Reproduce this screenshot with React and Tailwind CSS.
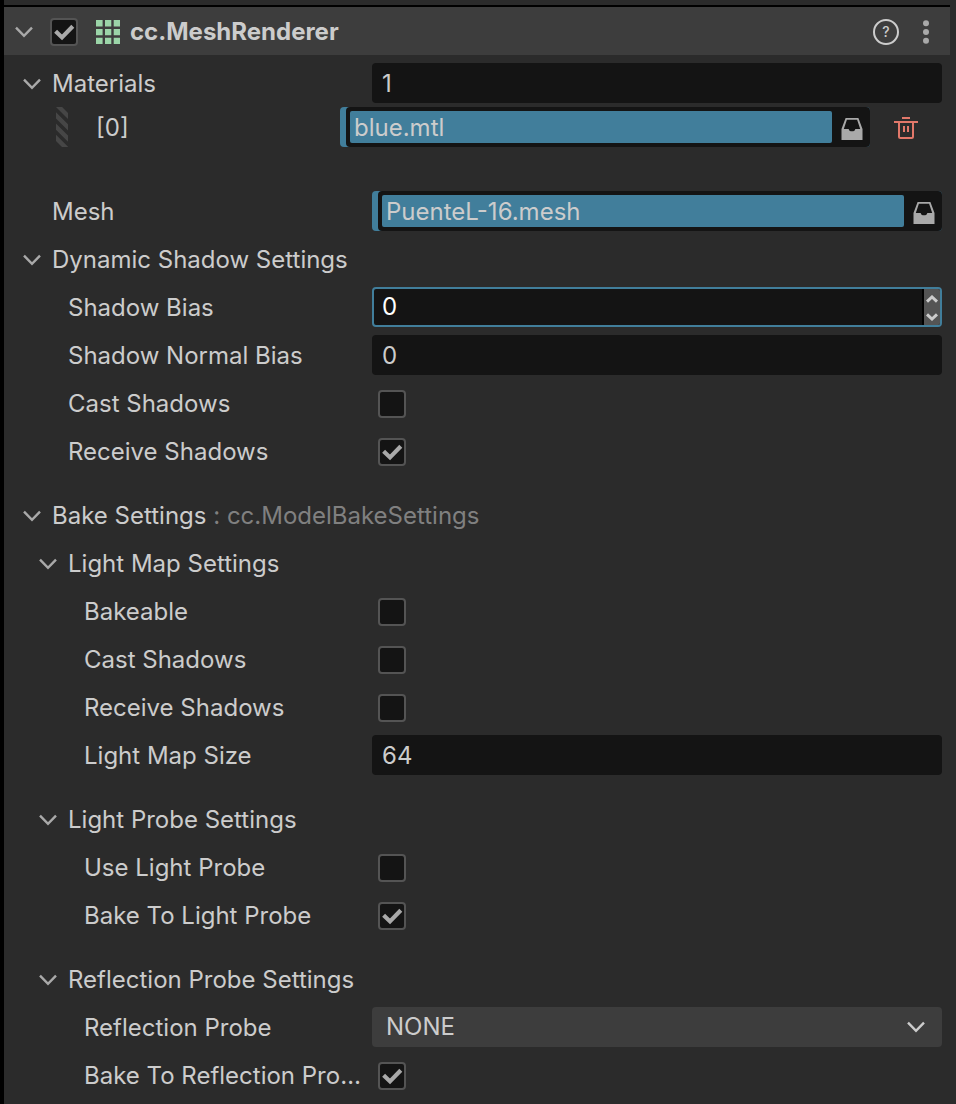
import { useState } from "react";

function Chevron({ className = "" }) {
  return (
    <svg viewBox="0 0 18 12" className={`h-3 w-[18px] ${className}`} fill="none" stroke="currentColor" strokeWidth="2.4" aria-hidden="true">
      <path d="M1 1.6 9 9.8 17 1.6" />
    </svg>
  );
}

function Toggle({ label }) {
  const [open, setOpen] = useState(true);
  return (
    <button
      type="button"
      aria-label={`Toggle ${label}`}
      aria-expanded={open}
      onClick={() => setOpen(!open)}
      className="flex w-7 shrink-0 items-center text-[#a9a9a9]"
    >
      <Chevron />
    </button>
  );
}

function Checkbox({ id, checked = false, label }) {
  return (
    <span className="grid size-7 shrink-0">
      <input
        id={id}
        type="checkbox"
        aria-label={label}
        defaultChecked={checked}
        className="peer size-7 appearance-none rounded border-2 border-[#545454] bg-[#141414] [grid-area:1/1]"
      />
      <svg
        viewBox="0 0 28 28"
        fill="none"
        stroke="#a9a9a9"
        strokeWidth="4.2"
        className="pointer-events-none invisible size-7 [grid-area:1/1] peer-checked:visible"
        aria-hidden="true"
      >
        <path d="M5.6 13.2 12 19.4 22.8 8.2" />
      </svg>
    </span>
  );
}

function Row({ id, label, indent, children }) {
  return (
    <div className="flex h-10 items-center">
      <label htmlFor={id} className={`w-[368px] shrink-0 truncate pr-2 pt-0.5 ${indent}`}>
        {label}
      </label>
      {children}
    </div>
  );
}

function CheckRow({ id, label, indent, checked }) {
  return (
    <Row id={id} label={label} indent={indent}>
      <span className="flex pl-[6px] pt-0.5">
        <Checkbox id={id} checked={checked} />
      </span>
    </Row>
  );
}

const inputStyle = "h-10 min-w-0 flex-1 rounded bg-[#141414] px-[10px] outline-none";

function GroupTitle({ label, indent, note }) {
  return (
    <div className={`flex h-10 items-center pt-0.5 ${indent}`}>
      <Toggle label={label} />
      <h3 className="truncate pl-px">
        {label}
        {note && <span className="text-[#808080]"> : {note}</span>}
      </h3>
    </div>
  );
}

function AssetField({ id, value }) {
  return (
    <div className="flex min-w-0 flex-1 rounded bg-[#417e9b] pl-[6px]">
      <div className="flex h-10 min-w-0 flex-1 items-center rounded bg-[#141414] p-1">
        <input
          id={id}
          readOnly
          defaultValue={value}
          className="h-8 min-w-0 flex-1 rounded-[2px] bg-[#417e9b] px-1 pt-0.5 outline-none"
        />
        <button type="button" aria-label={`Choose ${value}`} className="flex w-[34px] items-center justify-center pl-[6px] pt-1">
          <svg viewBox="0 0 22 22" className="size-[22px]" fill="#a9a9a9" aria-hidden="true">
            <path
              fillRule="evenodd"
              d="M4.6 0h12.8L21.5 11v11H.5V11ZM5.9 1.8 2.8 11H7.4c.4 0 .5.2.6.7.2 1 1.500 1.500 3 1.500s2.800-.5 3-1.500c.1-.5.2-.7.6-.7h4.600L16.100 1.800Z"
            />
          </svg>
        </button>
      </div>
    </div>
  );
}

function DragHandle() {
  return (
    <svg viewBox="0 0 12 40" className="h-10 w-3" stroke="#464646" strokeWidth="4.4" aria-hidden="true">
      <path d="M-3 -6 15 12M-3 5.3 15 23.3M-3 16.6 15 34.6M-3 27.9 15 45.9" />
    </svg>
  );
}

export default function App() {
  return (
    <main className="min-h-screen border-l-4 border-black bg-[#2b2b2b] font-['Inter','Liberation_Sans',sans-serif] text-2xl text-[#cccccc]">
      <div className="mr-[6px] pt-[5px]">
        <header className="flex h-[50px] items-center border-t-2 border-black bg-[#3d3d3d] pl-[11px] pr-4 pt-0.5">
          <Toggle label="cc.MeshRenderer" />
          <span className="flex pl-[7px]">
            <Checkbox id="enabled" label="Enable component" checked />
          </span>
          <svg viewBox="0 0 24 24" className="ml-[18px] size-6" fill="#9bd5a8" aria-hidden="true">
            <path d="M0 0h6.600v6.600H0zM9 0h6.300v6.600H9zM17.700 0H24v6.600h-6.300zM0 9h6.600v6.300H0zM9 9h6.300v6.300H9zM17.700 9H24v6.300h-6.300zM0 17.700h6.600V24H0zM9 17.700h6.300V24H9zM17.700 17.700H24V24h-6.300z" />
          </svg>
          <h2 className="flex-1 truncate pl-[10px] font-bold">cc.MeshRenderer</h2>
          <button type="button" aria-label="Help" className="flex size-[26px] items-center justify-center rounded-full border-2 border-[#cccccc] text-sm font-medium">
            ?
          </button>
          <button type="button" aria-label="More options" className="ml-[19px] flex w-4 justify-center">
            <svg viewBox="0 0 6 24" className="h-6 w-[6px]" fill="#a9a9a9" aria-hidden="true">
              <circle cx="3" cy="3.2" r="3" />
              <circle cx="3" cy="12" r="3" />
              <circle cx="3" cy="20.8" r="3" />
            </svg>
          </button>
        </header>
      </div>

      <div className="flex flex-col gap-6 pb-2 pr-[14px] pt-2">
        <section className="flex flex-col gap-2">
          <div className="mb-9 flex flex-col gap-1">
            <div className="flex h-10 items-center">
              <div className="flex w-[368px] shrink-0 items-center pl-[19px] pt-0.5">
                <Toggle label="Materials" />
                <label htmlFor="materials" className="pl-px">Materials</label>
              </div>
              <input id="materials" defaultValue="1" className={inputStyle} />
            </div>
            <div className="flex h-10 items-center pl-[52px]">
              <DragHandle />
              <label htmlFor="material-0" className="w-[272px] shrink-0 pl-7 pt-0.5">[0]</label>
              <AssetField id="material-0" value="blue.mtl" />
              <button type="button" aria-label="Delete material" className="flex w-[72px] justify-center pt-0.5">
                <svg viewBox="0 0 24 22" className="h-[22px] w-6" fill="none" stroke="#e2786a" strokeWidth="2" aria-hidden="true">
                  <path d="M8 1h8M0 5h24M5 5v14.5q0 1.5 1.5 1.5h11q1.5 0 1.5-1.5V5M10 9v6M14 9v6" />
                </svg>
              </button>
            </div>
          </div>
          <Row id="mesh" label="Mesh" indent="pl-12">
            <AssetField id="mesh" value="PuenteL-16.mesh" />
          </Row>
          <GroupTitle label="Dynamic Shadow Settings" indent="pl-[19px]" />
          <Row id="shadow-bias" label="Shadow Bias" indent="pl-16">
            <div className="flex h-10 min-w-0 flex-1 overflow-hidden rounded border-2 border-[#417e9b] bg-[#141414]">
              <input id="shadow-bias" defaultValue="0" className="min-w-0 flex-1 bg-transparent px-2 text-white outline-none" />
              <div className="flex w-[18px] flex-col border-l-2 border-black bg-[#545454]">
                <button type="button" aria-label="Increase" className="flex flex-1 items-center justify-center pt-0.5">
                  <svg viewBox="0 0 12 8" className="h-2 w-3" fill="none" stroke="#cccccc" strokeWidth="3" aria-hidden="true">
                    <path d="M1 6.600 6 2 11 6.600" />
                  </svg>
                </button>
                <button type="button" aria-label="Decrease" className="flex flex-1 items-center justify-center pt-0.5">
                  <svg viewBox="0 0 12 8" className="h-2 w-3" fill="none" stroke="#cccccc" strokeWidth="3" aria-hidden="true">
                    <path d="M1 1.400 6 6 11 1.400" />
                  </svg>
                </button>
              </div>
            </div>
          </Row>
          <Row id="normal-bias" label="Shadow Normal Bias" indent="pl-16">
            <input id="normal-bias" defaultValue="0" className={inputStyle} />
          </Row>
          <CheckRow id="cast" label="Cast Shadows" indent="pl-16" />
          <CheckRow id="receive" label="Receive Shadows" indent="pl-16" checked />
        </section>

        <section className="flex flex-col gap-2">
          <GroupTitle label="Bake Settings" note="cc.ModelBakeSettings" indent="pl-[19px]" />
          <GroupTitle label="Light Map Settings" indent="pl-[35px]" />
          <CheckRow id="bakeable" label="Bakeable" indent="pl-20" />
          <CheckRow id="map-cast" label="Cast Shadows" indent="pl-20" />
          <CheckRow id="map-receive" label="Receive Shadows" indent="pl-20" />
          <Row id="map-size" label="Light Map Size" indent="pl-20">
            <input id="map-size" defaultValue="64" className={inputStyle} />
          </Row>
        </section>

        <section className="flex flex-col gap-2">
          <GroupTitle label="Light Probe Settings" indent="pl-[35px]" />
          <CheckRow id="use-probe" label="Use Light Probe" indent="pl-20" />
          <CheckRow id="bake-probe" label="Bake To Light Probe" indent="pl-20" checked />
        </section>

        <section className="flex flex-col gap-2">
          <GroupTitle label="Reflection Probe Settings" indent="pl-[35px]" />
          <Row id="reflection" label="Reflection Probe" indent="pl-20">
            <div className="grid min-w-0 flex-1 items-center">
              <select id="reflection" defaultValue="NONE" className="h-10 w-full appearance-none rounded bg-[#3d3d3d] px-[14px] outline-none [grid-area:1/1]">
                <option>NONE</option>
              </select>
              <Chevron className="pointer-events-none mr-[17px] justify-self-end [grid-area:1/1]" />
            </div>
          </Row>
          <CheckRow id="bake-reflection" label="Bake To Reflection Probe" indent="pl-20" checked />
        </section>
      </div>
    </main>
  );
}
